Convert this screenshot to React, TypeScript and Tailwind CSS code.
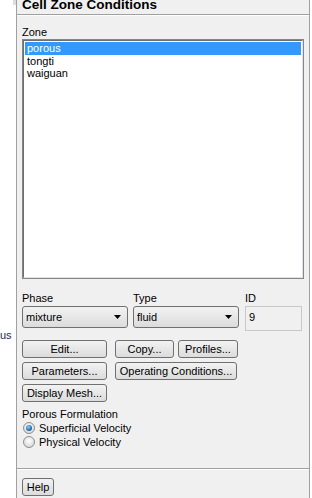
import React from "react";

const font = { fontFamily: "Tahoma, 'Liberation Sans', Arial, sans-serif" };

function Btn({ label, w }: { label: string; w: string }) {
  return (
    <div
      className={`${w} h-[18px] flex items-center justify-center whitespace-nowrap rounded-[3px] border border-[#707070] bg-gradient-to-b from-[#f2f2f2] to-[#dcdcdc] text-[11px] text-black leading-none`}
    >
      {label}
    </div>
  );
}

function Drop({ label, w }: { label: string; w: string }) {
  return (
    <div
      className={`${w} h-[22px] flex items-center justify-between rounded-[3px] border border-[#707070] bg-gradient-to-b from-[#f2f2f2] to-[#dcdcdc] pl-[3px] pr-[6px] text-[11px] text-black leading-none`}
    >
      <span>{label}</span>
      <svg width="7" height="4" viewBox="0 0 7 4">
        <polygon points="0,0 7,0 3.5,4" fill="#000" />
      </svg>
    </div>
  );
}

function Radio({ checked, label }: { checked: boolean; label: string }) {
  return (
    <div className="flex items-center gap-[4px] h-[14px] pl-[1px]">
      <svg width="12" height="12" viewBox="0 0 12 12">
        <defs>
          <radialGradient id={checked ? "rg1" : "rg0"} cx="50%" cy="40%" r="60%">
            <stop offset="0%" stopColor="#ffffff" />
            <stop offset="100%" stopColor="#d6d6d6" />
          </radialGradient>
          <radialGradient id="dot" cx="40%" cy="35%" r="70%">
            <stop offset="0%" stopColor="#8fd0ff" />
            <stop offset="100%" stopColor="#0b4f8a" />
          </radialGradient>
        </defs>
        <circle cx="6" cy="6" r="5.5" fill={`url(#${checked ? "rg1" : "rg0"})`} stroke="#8e8f8f" />
        {checked && <circle cx="6" cy="6" r="3" fill="url(#dot)" />}
      </svg>
      <span className="text-[11px] leading-none text-black">{label}</span>
    </div>
  );
}

export default function App() {
  return (
    <div className="flex w-[312px] h-[498px] bg-white overflow-hidden" style={font}>
      <div className="w-[16px] shrink-0 relative bg-white">
        <div className="absolute left-[13px] top-0 w-[3px] h-[5px] bg-[#dcdce4]" />
        <div className="absolute left-0 top-[330px] text-[11px] text-[#1a2a5a] leading-none">us</div>
      </div>
      <div className="w-[294px] shrink-0 border-l border-r border-[#a0a0a0] bg-[#f0f0f0] flex flex-col">
        <div className="h-[15px] border-b border-[#a0a0a0] shadow-[0_1px_0_#ffffff] overflow-hidden pl-[5px]">
          <div className="text-[13.5px] font-bold text-black leading-none -mt-[2px] whitespace-nowrap">Cell Zone Conditions</div>
        </div>
        <div className="flex flex-col pl-[5px] pr-[3px] flex-1">
          <div className="text-[11px] leading-none text-black mt-[12px] h-[11px]">Zone</div>
          <div className="mt-[1px] w-[282px] h-[240px] border border-[#82878f] bg-white">
            <div className="w-full h-full border-l border-t border-[#6e6e6e] border-r border-b border-r-[#e3e3e3] border-b-[#e3e3e3] pt-[1px] pl-[1px]">
              <div className="h-[13px] bg-[#3399ff] text-white text-[11px] leading-[13px] pl-[2px] mr-[1px]">porous</div>
              <div className="h-[12px] text-black text-[11px] leading-[12px] pl-[2px]">tongti</div>
              <div className="h-[12px] text-black text-[11px] leading-[12px] pl-[2px]">waiguan</div>
            </div>
          </div>
          <div className="flex mt-[14px] gap-[5px]">
            <div className="flex flex-col gap-[2px]">
              <div className="text-[11px] leading-none h-[11px]">Phase</div>
              <Drop label="mixture" w="w-[106px]" />
            </div>
            <div className="flex flex-col gap-[2px]">
              <div className="text-[11px] leading-none h-[11px]">Type</div>
              <Drop label="fluid" w="w-[106px]" />
            </div>
            <div className="flex flex-col gap-[2px] ml-[1px]">
              <div className="text-[11px] leading-none h-[11px]">ID</div>
              <div className="w-[57px] h-[25px] border border-[#c8c8c8] bg-[#f0f0f0] text-[11px] leading-none pl-[3px] pt-[5px]">9</div>
            </div>
          </div>
          <div className="flex flex-col gap-[4px] mt-[9px]">
            <div className="flex gap-[8px]">
              <Btn label="Edit..." w="w-[85px]" />
              <div className="flex gap-[4px]">
                <Btn label="Copy..." w="w-[59px]" />
                <Btn label="Profiles..." w="w-[60px]" />
              </div>
            </div>
            <div className="flex gap-[8px]">
              <Btn label="Parameters..." w="w-[85px]" />
              <Btn label="Operating Conditions..." w="w-[122px]" />
            </div>
            <Btn label="Display Mesh..." w="w-[85px]" />
          </div>
          <div className="text-[11px] leading-none mt-[7px] h-[11px]">Porous Formulation</div>
          <div className="flex flex-col mt-[1px]">
            <Radio checked label="Superficial Velocity" />
            <Radio checked={false} label="Physical Velocity" />
          </div>
        </div>
        <div className="border-t border-[#a0a0a0] shadow-[inset_0_1px_0_#ffffff] h-[30px] pl-[5px] pt-[9px]">
          <Btn label="Help" w="w-[32px]" />
        </div>
      </div>
    </div>
  );
}
